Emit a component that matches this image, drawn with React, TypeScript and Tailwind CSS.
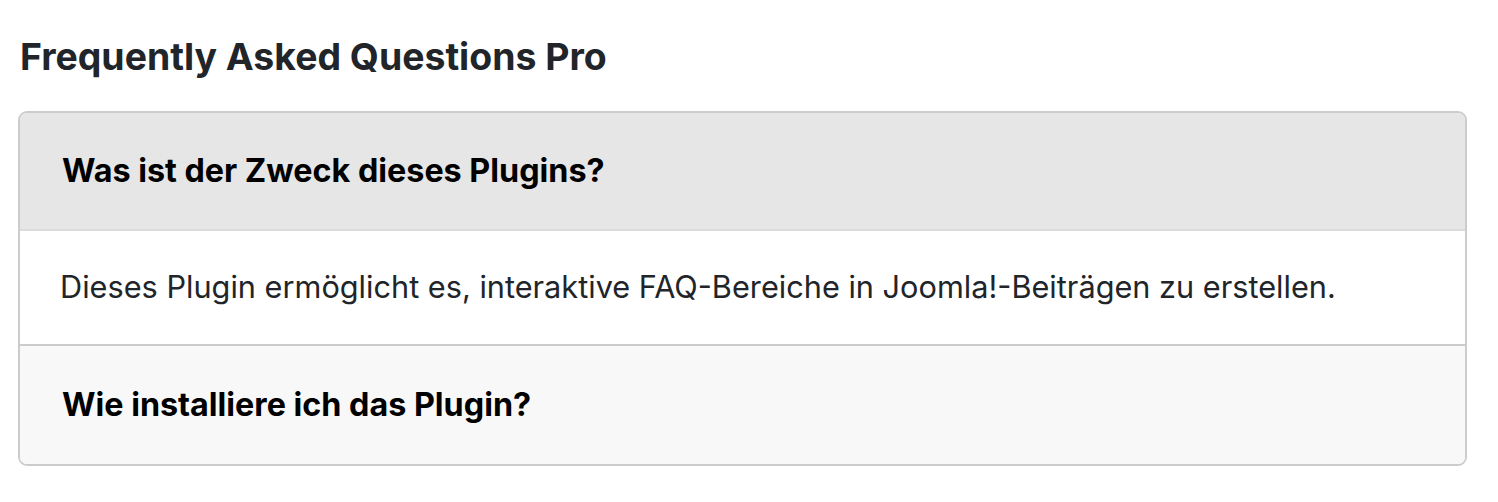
const faqs = [
  {
    question: "Was ist der Zweck dieses Plugins?",
    answer: "Dieses Plugin ermöglicht es, interaktive FAQ-Bereiche in Joomla!-Beiträgen zu erstellen.",
    open: true,
  },
  {
    question: "Wie installiere ich das Plugin?",
    answer: "",
    open: false,
  },
]

export default function App() {
  return (
    <div className="min-h-[502px] bg-white pl-[18px] pr-[31px] pt-[35px]">
      {/* Title */}
      <h2 className="pl-[2px] text-[37.4px] font-bold leading-[44px] text-[#212529] [font-family:Inter,'Noto_Sans',sans-serif]">
        Frequently Asked Questions Pro
      </h2>

      {/* Accordion */}
      <div className="mt-[32px] overflow-hidden rounded-[9px] border-2 border-[#cccccc]">
        {faqs.map((faq, index) => (
          <div key={index} className={index > 0 ? "border-t-2 border-[#cccccc]" : ""}>
            <div
              className={`flex h-[118px] items-center px-[42px] ${
                faq.open ? "border-b-2 border-[#dcdcdc] bg-[#e6e6e6]" : "bg-[#f8f8f8]"
              }`}
            >
              <span className="text-[32.3px] font-bold text-black [font-family:Inter,'Noto_Sans',sans-serif]">
                {faq.question}
              </span>
            </div>
            {faq.open && (
              <div className="flex h-[113px] items-center bg-white px-10">
                <p className="text-[30.7px] text-[#212529] [font-family:Inter,'Noto_Sans',sans-serif]">
                  {faq.answer}
                </p>
              </div>
            )}
          </div>
        ))}
      </div>
    </div>
  )
}
